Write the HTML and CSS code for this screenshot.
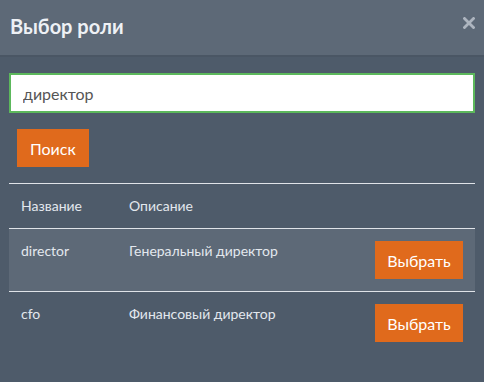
FILE: index.html
```html
<!DOCTYPE html>
<html lang="ru">
<head>
<meta charset="UTF-8">
<title>Выбор роли</title>
<link rel="stylesheet" href="styles.css">
</head>
<body>

<div class="modal">
    <div class="modal-header">
        <h3>Выбор роли</h3>
        <span class="close">
            <svg width="12" height="12" viewBox="0 0 12 12"><path d="M1.5 1.5 L10.5 10.5 M10.5 1.5 L1.5 10.5" stroke="#adb5bf" stroke-width="2.8" stroke-linecap="square"/></svg>
        </span>
    </div>
    <div class="modal-body">
        <input type="text" class="search-input" value="директор">
        <button type="button" class="btn">Поиск</button>

        <table class="roles">
            <thead>
                <tr>
                    <th class="col-name">Название</th>
                    <th>Описание</th>
                    <th></th>
                </tr>
            </thead>
            <tbody>
                <tr class="odd">
                    <td>director</td>
                    <td>Генеральный директор</td>
                    <td class="col-action"><button type="button" class="btn">Выбрать</button></td>
                </tr>
                <tr>
                    <td>cfo</td>
                    <td>Финансовый директор</td>
                    <td class="col-action"><button type="button" class="btn">Выбрать</button></td>
                </tr>
            </tbody>
        </table>
    </div>
</div>

</body>
</html>
```

FILE: styles.css
```css
body {
    margin: 0;
    padding: 0;
    background-color: #4e5b6a;
    font-family: Lato, "Open Sans", sans-serif;
    color: #e3e8ee;
}
.modal {
    width: 484px;
    height: 382px;
    background-color: #4e5b6a;
}
.modal-header {
    display: flex;
    justify-content: space-between;
    align-items: flex-start;
    height: 57px;
    padding: 0 10px;
    box-sizing: border-box;
    background-color: #5d6977;
    border-bottom: 2px solid #4a5664;
}
.modal-header h3 {
    margin: 0;
    padding-top: 14px;
    font-size: 20px;
    font-weight: bold;
    color: #eef1f5;
}
.close {
    display: block;
    margin-top: 17px;
    margin-right: -1px;
}
.close svg {
    display: block;
}
.modal-body {
    padding: 16px 9px 0;
}
.search-input {
    display: block;
    width: 100%;
    height: 40px;
    box-sizing: border-box;
    border: 2px solid #5cb85c;
    padding: 0 12px;
    font-family: Lato, "Open Sans", sans-serif;
    font-size: 16px;
    color: #555;
    background: #fff;
    outline: none;
}
.btn {
    height: 38px;
    padding: 0 13px;
    border: none;
    background-color: #e06a1c;
    color: #fff;
    font-family: Lato, "Open Sans", sans-serif;
    font-size: 16px;
    cursor: pointer;
}
.modal-body > .btn {
    margin: 16px 0 16px 8px;
}
.roles {
    width: 100%;
    border-collapse: collapse;
    font-size: 14px;
    border-top: 1px solid #dfe3e8;
}
.roles th {
    text-align: left;
    font-weight: normal;
    padding: 12px;
    line-height: 20px;
    border-bottom: 1px solid #dfe3e8;
}
.roles td {
    padding: 12px;
    line-height: 20px;
    vertical-align: top;
}
.roles .col-name {
    width: 84px;
}
.roles tr.odd td {
    background-color: #5d6977;
    border-bottom: 1px solid #dfe3e8;
}
.roles .col-action {
    text-align: right;
    width: 88px;
}
.roles .col-action .btn {
    width: 88px;
    padding: 0;
    display: block;
}
```
